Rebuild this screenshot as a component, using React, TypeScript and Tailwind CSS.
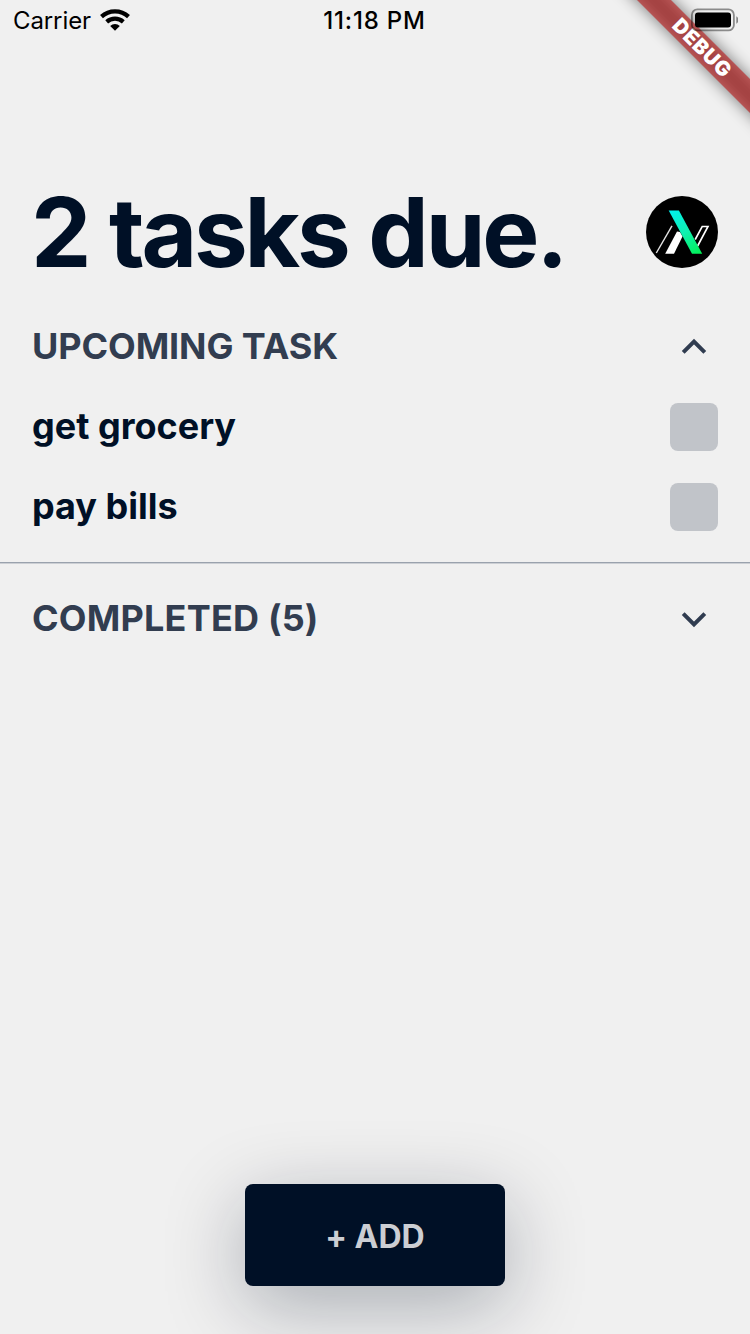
import React from "react";

const font = "font-['Inter',sans-serif]";

function Wifi() {
  return (
    <svg width="30" height="22" viewBox="0 0 30 22" fill="none" stroke="#000" strokeWidth="4.2">
      <path d="M1.5 7.6 A19.8 19.8 0 0 1 28.5 7.6" />
      <path d="M6.7 12.9 A12.4 12.4 0 0 1 23.3 12.9" />
      <path d="M15 21.8 L10.2 17 A7 7 0 0 1 19.8 17 Z" fill="#000" stroke="none" />
    </svg>
  );
}

function Battery() {
  return (
    <svg width="48" height="24" viewBox="0 0 48 24">
      <rect x="1.9" y="1.4" width="42" height="21" rx="5.5" fill="none" stroke="#000" strokeOpacity="0.42" strokeWidth="1.8" />
      <rect x="5" y="4.5" width="36" height="15" rx="3" fill="#000" />
      <path d="M46.3 8.2 C49.2 9.7 49.2 14.3 46.3 15.7 Z" fill="#000" fillOpacity="0.45" />
    </svg>
  );
}

function Logo() {
  return (
    <svg className="size-[72px] shrink-0" viewBox="0 0 72 72">
      <defs>
        <linearGradient id="stripe" x1="24" y1="14" x2="56" y2="58" gradientUnits="userSpaceOnUse">
          <stop offset="0" stopColor="#00f0f0" />
          <stop offset="0.5" stopColor="#10f0b0" />
          <stop offset="1" stopColor="#00f050" />
        </linearGradient>
      </defs>
      <circle cx="36" cy="36" r="36" fill="#000" />
      <path d="M26 29.8 L10.3 57" stroke="#e4e4e4" strokeWidth="1.4" />
      <path d="M31 35.5 L34 36 L36.5 40.5 L28 57.7 L19.2 57.7 Z" fill="#fff" />
      <path d="M49.2 43.5 L56.2 30.5 L62 30.5 L51.6 50" stroke="#fff" strokeWidth="1.6" fill="none" />
      <path d="M22.7 14.5 L32.9 14.5 L56.2 57.7 L46 57.7 Z" fill="url(#stripe)" />
    </svg>
  );
}

function Chevron({ down }: { down?: boolean }) {
  return (
    <svg className="size-12" viewBox="0 0 48 48" fill="none" stroke="#303c50" strokeWidth="4">
      <path d={down ? "M13.2 18.6 L24 29.4 L34.8 18.6" : "M13.2 29.4 L24 18.6 L34.8 29.4"} />
    </svg>
  );
}

function Section({ title, down, spacing }: { title: string; down?: boolean; spacing: string }) {
  return (
    <div className="flex h-12 items-center justify-between px-8">
      <h2 className={`mb-0.5 text-[36px] leading-[44px] font-bold text-[#323d50] ${spacing}`}>{title}</h2>
      <Chevron down={down} />
    </div>
  );
}

function Task({ title }: { title: string }) {
  return (
    <li className="flex h-20 items-center justify-between px-8">
      <span className="mb-0.5 text-[36px] leading-[44px] font-bold text-[#001026]">{title}</span>
      <span className="size-12 rounded-lg bg-[#c1c4c9]" />
    </li>
  );
}

export default function App() {
  return (
    <div className={`relative flex h-[1334px] w-[750px] flex-col overflow-hidden bg-[#f0f0f0] ${font}`}>
      <div className="absolute top-9 left-[602px] h-6 w-[200px] rotate-45">
        <div className="absolute inset-0 bg-black/50 blur-[8px]" />
        <div className="relative flex h-6 items-center justify-center bg-[#b71c1c]/63">
          <span className="text-[20.4px] leading-none font-black tracking-[0.6px] text-white">DEBUG</span>
        </div>
      </div>
      <header className="relative grid h-10 grid-cols-3 items-center pl-[13px] text-[24px] leading-[38px] text-black">
        <div className="flex items-center gap-[9px]">
          <span className="pt-0.5 tracking-[-0.1px]">Carrier</span>
          <Wifi />
        </div>
        <span className="-ml-3.5 pt-0.5 text-center font-medium tracking-[0.8px] whitespace-nowrap">11:18 PM</span>
        <div className="flex justify-end pr-[12px]">
          <Battery />
        </div>
      </header>
      <div className="mt-[134px] flex h-[116px] items-center justify-between pr-8 pl-[31px]">
        <h1 className="text-[96px] leading-[116px] font-bold tracking-[-3.15px] whitespace-nowrap text-[#001026] [word-spacing:1px]">2 tasks due.</h1>
        <Logo />
      </div>
      <main className="mt-[33px] flex flex-col">
        <Section title="UPCOMING TASK" spacing="tracking-[-0.1px]" />
        <ul className="mt-4 flex flex-col">
          <Task title="get grocery" />
          <Task title="pay bills" />
        </ul>
        <div className="mt-[15px] h-0.5 border-t border-[#9aa2ad] bg-[#cccfd4]" />
        <div className="h-[31px]" />
        <Section title="COMPLETED (5)" down spacing="tracking-[0.2px]" />
      </main>
      <button className="mt-auto mb-12 flex h-[102px] w-[260px] items-center justify-center self-center rounded-lg bg-[#001026] pt-1 text-[32px] font-bold text-[#ccced3] shadow-[0_20px_80px_rgba(0,16,38,0.3)] [font-feature-settings:'calt'_0]">
        + ADD
      </button>
    </div>
  );
}
